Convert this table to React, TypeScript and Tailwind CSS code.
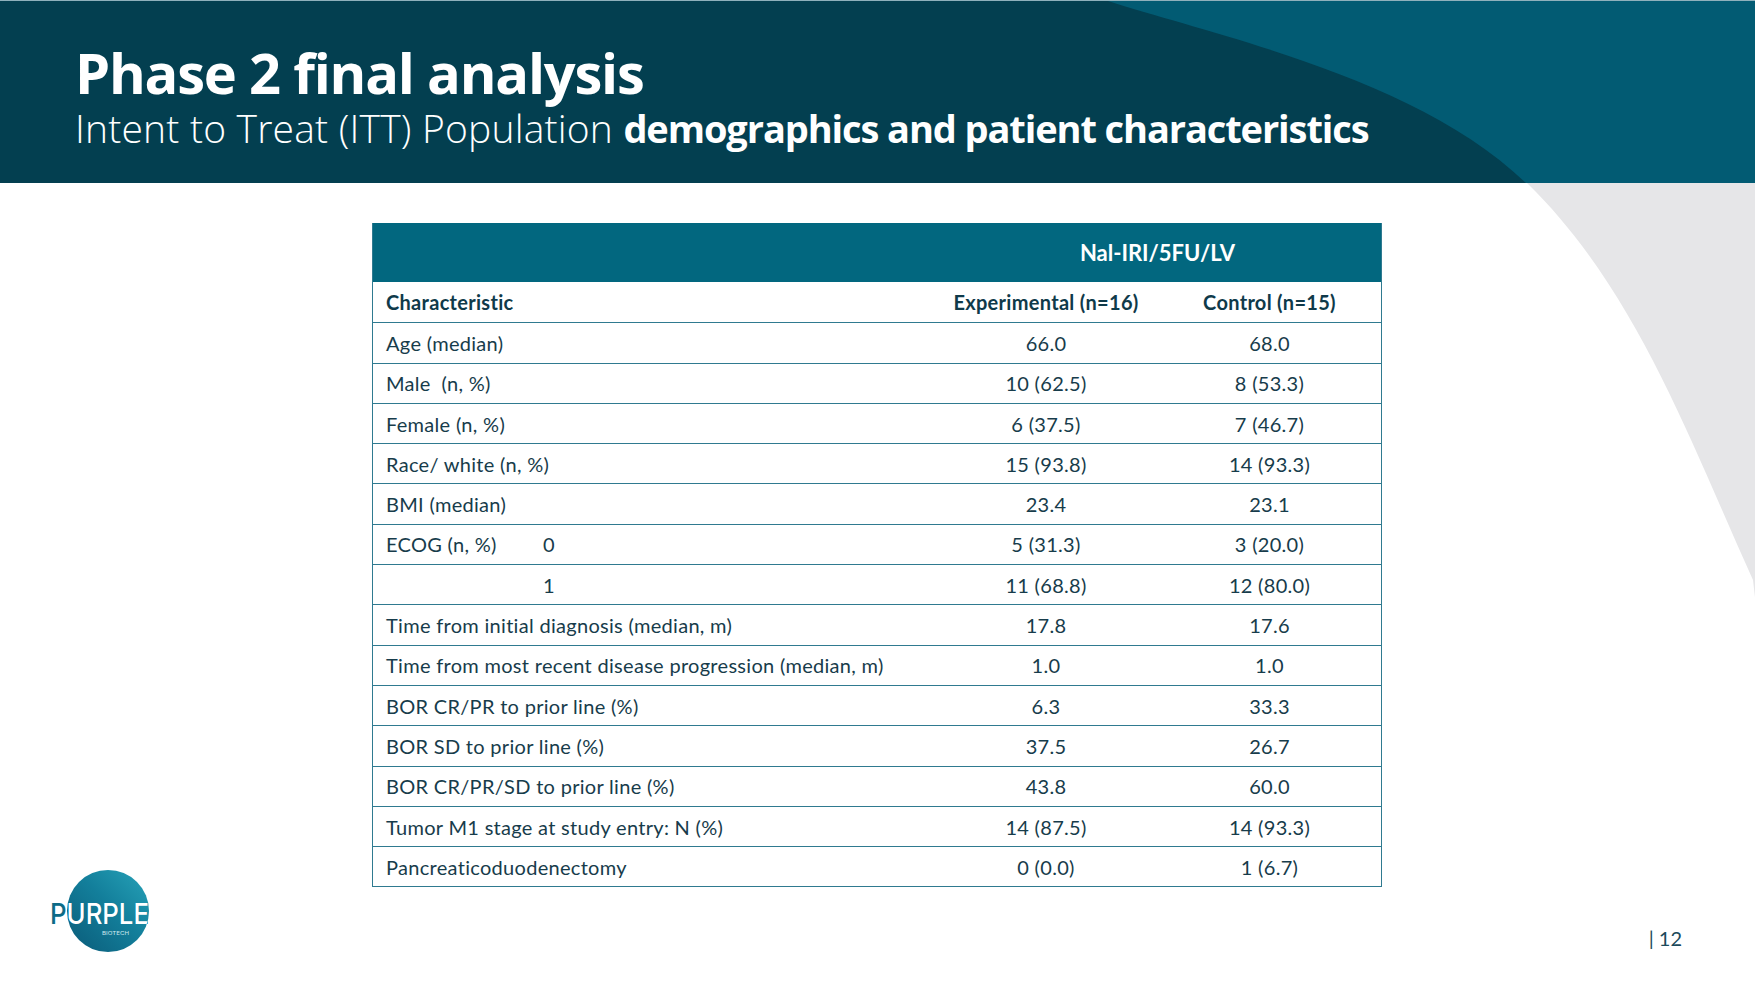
import React from 'react'

const ARC = 'M1108,0 C1220,36 1418,77 1527,183 C1636,289 1690,441 1753,580 L1760,640 L1760,0 Z'

type Row = { label: string; sub?: string; exp: string; ctl: string }

const rows: Row[] = [
  { label: 'Age (median)', exp: '66.0', ctl: '68.0' },
  { label: 'Male  (n, %)', exp: '10 (62.5)', ctl: '8 (53.3)' },
  { label: 'Female (n, %)', exp: '6 (37.5)', ctl: '7 (46.7)' },
  { label: 'Race/ white (n, %)', exp: '15 (93.8)', ctl: '14 (93.3)' },
  { label: 'BMI (median)', exp: '23.4', ctl: '23.1' },
  { label: 'ECOG (n, %)', sub: '0', exp: '5 (31.3)', ctl: '3 (20.0)' },
  { label: '', sub: '1', exp: '11 (68.8)', ctl: '12 (80.0)' },
  { label: 'Time from initial diagnosis (median, m)', exp: '17.8', ctl: '17.6' },
  { label: 'Time from most recent disease progression (median, m)', exp: '1.0', ctl: '1.0' },
  { label: 'BOR CR/PR to prior line (%)', exp: '6.3', ctl: '33.3' },
  { label: 'BOR SD to prior line (%)', exp: '37.5', ctl: '26.7' },
  { label: 'BOR CR/PR/SD to prior line (%)', exp: '43.8', ctl: '60.0' },
  { label: 'Tumor M1 stage at study entry: N (%)', exp: '14 (87.5)', ctl: '14 (93.3)' },
  { label: 'Pancreaticoduodenectomy', exp: '0 (0.0)', ctl: '1 (6.7)' },
]

// word mark is teal on white and white where it crosses the disc, so one text
// filled with a pattern that paints the disc white
function Logo() {
  return (
    <svg width="140" height="84" viewBox="0 0 140 84">
      <defs>
        <linearGradient id="lg" x1="0" y1="1" x2="1" y2="0">
          <stop offset="0" stopColor="#0a5a78" />
          <stop offset="0.55" stopColor="#137f9b" />
          <stop offset="1" stopColor="#27a3b9" />
        </linearGradient>
        <pattern id="lp" patternUnits="userSpaceOnUse" x="0" y="0" width="140" height="84">
          <rect width="140" height="84" fill="#0d6a86" />
          <circle cx="64" cy="42" r="41" fill="#ffffff" />
        </pattern>
      </defs>
      <circle cx="64" cy="42" r="41" fill="url(#lg)" />
      <text x="6" y="55" fontSize="29" fontFamily="Inter, sans-serif" fontWeight="500" textLength="99" lengthAdjust="spacingAndGlyphs" fill="url(#lp)">PURPLE</text>
      <text x="58" y="66" fontSize="5" fontFamily="Inter, sans-serif" textLength="27" lengthAdjust="spacingAndGlyphs" fill="#cfe9ef">BIOTECH</text>
    </svg>
  )
}

export default function App() {
  return (
    <div className="relative w-[1755px] h-[992px] overflow-hidden bg-white">
      <svg className="absolute left-0 top-0 pointer-events-none" width="1755" height="992" viewBox="0 0 1755 992">
        <path d={ARC} fill="#e6e6e8" />
      </svg>

      <header className="relative h-[183px] bg-[#033f50] border-t border-[#8fb1bc] overflow-hidden">
        <svg className="absolute left-0 top-0" width="1755" height="183" viewBox="0 0 1755 183">
          <path d={ARC} fill="#025b73" />
        </svg>
        <div className="relative pl-[75px] pt-[47px] text-white font-['Open_Sans',sans-serif]">
          <h1 className="text-[56px] leading-[48px] font-bold tracking-[-1.2px]">Phase 2 final analysis</h1>
          <p className="mt-[13px] leading-[38px]">
            <span className="text-[39px] font-light tracking-[0.2px]">Intent to Treat (ITT) Population </span>
            <span className="text-[38px] font-bold tracking-[-1.1px]">demographics and patient characteristics</span>
          </p>
        </div>
      </header>

      <main className="relative flex h-[808px] font-['Lato',sans-serif]">
        <div className="w-[372px] flex flex-col justify-end pb-[38px] pl-[44px]">
          <Logo />
        </div>

        <div className="pt-[40px]">
          <div className="w-[1010px] border-x-[1.5px] border-b-[1.5px] border-[#2f7a90]">
            <div className="grid grid-cols-[561px_1fr] h-[59px] bg-[#02677f] text-white">
              <div />
              <div className="flex items-center justify-center text-[22px] font-bold">Nal-IRI/5FU/LV</div>
            </div>
            <div className="grid grid-cols-[561px_224px_1fr] h-[40.3px] items-center text-[20px] tracking-[0.3px] font-bold text-[#0f3a4a]">
              <div className="pl-[13px]">Characteristic</div>
              <div className="text-center">Experimental (n=16)</div>
              <div className="text-center">Control (n=15)</div>
            </div>
            {rows.map((r, i) => (
              <div key={i} className="grid grid-cols-[561px_224px_1fr] h-[40.3px] items-center border-t-[1.5px] border-[#2f7a90] text-[20px] tracking-[0.3px] text-[#173c4b]">
                <div className="pl-[13px] flex whitespace-pre">
                  {r.sub !== undefined ? (
                    <>
                      <span className="w-[157px]">{r.label}</span>
                      <span>{r.sub}</span>
                    </>
                  ) : (
                    r.label
                  )}
                </div>
                <div className="text-center">{r.exp}</div>
                <div className="text-center">{r.ctl}</div>
              </div>
            ))}
          </div>
        </div>

        <div className="flex-1 flex flex-col justify-end items-end pb-[38px] pr-[73px]">
          <span className="text-[20px] text-[#1c4a5c] font-['Lato',sans-serif]">| 12</span>
        </div>
      </main>
    </div>
  )
}
